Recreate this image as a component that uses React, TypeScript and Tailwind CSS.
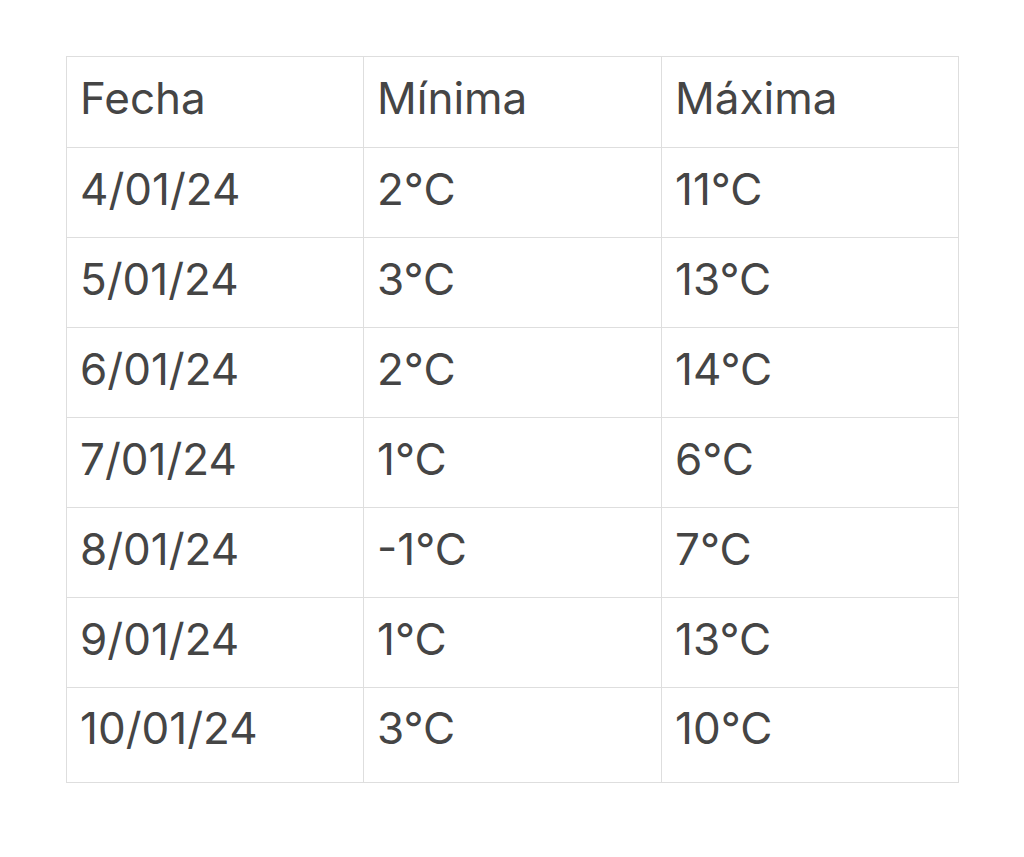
const rows: [string, string, string][] = [
  ['4/01/24', '2°C', '11°C'],
  ['5/01/24', '3°C', '13°C'],
  ['6/01/24', '2°C', '14°C'],
  ['7/01/24', '1°C', '6°C'],
  ['8/01/24', '-1°C', '7°C'],
  ['9/01/24', '1°C', '13°C'],
  ['10/01/24', '3°C', '10°C'],
];

function Row({ cells, last, head }: { cells: [string, string, string]; last?: boolean; head?: boolean }) {
  return (
    <div
      className={`grid grid-cols-[296px_298px_297px] ${last ? 'h-[95px]' : 'h-[90px]'} ${head ? '' : 'border-t border-[#dedede]'}`}
    >
      {cells.map((c, i) => (
        <div
          key={i}
          className={`flex items-center pl-[13px] ${last ? 'pb-[15px]' : 'pb-[8px]'} ${i > 0 ? 'border-l border-[#dedede]' : ''}`}
        >
          {c}
        </div>
      ))}
    </div>
  );
}

export default function App() {
  return (
    <div className="w-[1024px] h-[857px] bg-white pt-[56px] pl-[66px]">
      <div
        className="w-[893px] border border-[#dedede] text-[44px] text-[#454545]"
        style={{ fontFamily: 'Inter, "Noto Sans", sans-serif' }}
      >
        <Row cells={['Fecha', 'Mínima', 'Máxima']} head />
        {rows.map((r, i) => (
          <Row key={i} cells={r} last={i === rows.length - 1} />
        ))}
      </div>
    </div>
  );
}
